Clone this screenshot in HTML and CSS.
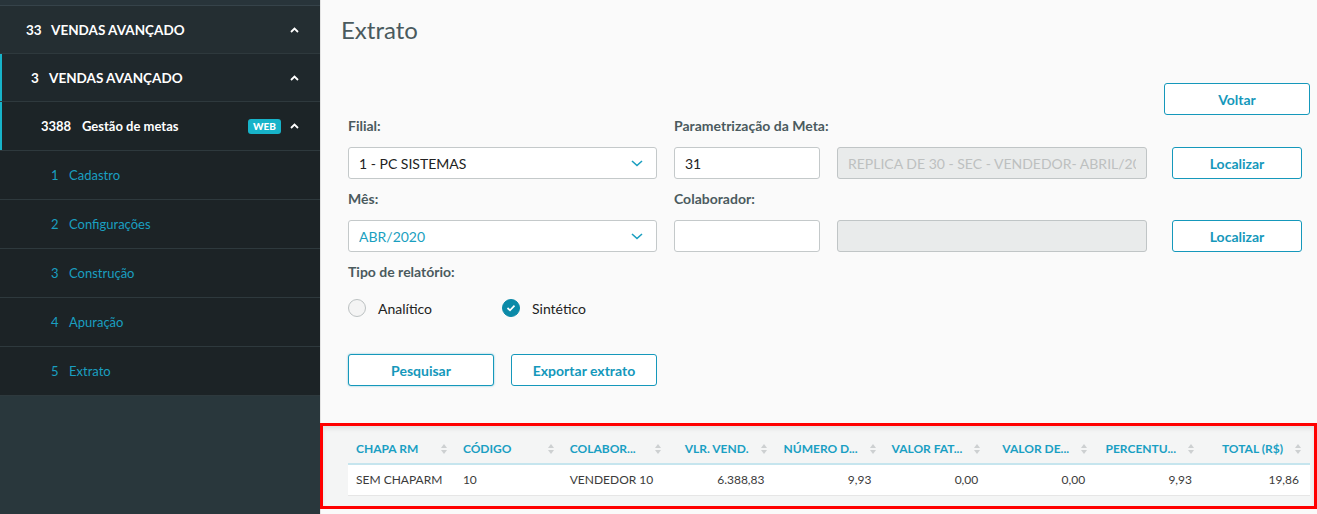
FILE: index.html
```html
<!DOCTYPE html>
<html lang="pt-BR">
  <head>
    <meta charset="UTF-8">
    <title>Extrato</title>
    <link rel="stylesheet" href="styles.css">
  </head>
  <body>

    <nav id="menu">
      <div class="menu-stub"></div>
      <div class="menu-row level-1">
        <span class="num">33</span><span class="label">VENDAS AVANÇADO</span>
        <svg class="caret" width="9" height="6" viewBox="0 0 9 6"><path d="M1 5 L4.5 1.5 L8 5" fill="none" stroke="#fff" stroke-width="1.8"/></svg>
      </div>
      <div class="menu-row level-2 active">
        <span class="num">3</span><span class="label">VENDAS AVANÇADO</span>
        <svg class="caret" width="9" height="6" viewBox="0 0 9 6"><path d="M1 5 L4.5 1.5 L8 5" fill="none" stroke="#fff" stroke-width="1.8"/></svg>
      </div>
      <div class="menu-row level-3 active">
        <span class="num">3388</span><span class="label">Gestão de metas</span>
        <span class="badge">WEB</span>
        <svg class="caret" width="9" height="6" viewBox="0 0 9 6"><path d="M1 5 L4.5 1.5 L8 5" fill="none" stroke="#fff" stroke-width="1.8"/></svg>
      </div>
      <div class="menu-row sub"><span class="num">1</span><span class="label">Cadastro</span></div>
      <div class="menu-row sub"><span class="num">2</span><span class="label">Configurações</span></div>
      <div class="menu-row sub"><span class="num">3</span><span class="label">Construção</span></div>
      <div class="menu-row sub"><span class="num">4</span><span class="label">Apuração</span></div>
      <div class="menu-row sub"><span class="num">5</span><span class="label">Extrato</span></div>
    </nav>

    <main id="page">
      <div class="content">
        <h1 class="title">Extrato</h1>

        <div class="toolbar">
          <button class="btn btn-back">Voltar</button>
        </div>

        <div class="form">
          <div class="field">
            <label>Filial:</label>
            <div class="select">
              <select><option>1 - PC SISTEMAS</option></select>
              <svg class="chevron" width="12" height="7" viewBox="0 0 12 7"><path d="M1 1 L6 5.5 L11 1" fill="none" stroke="#1a9fc0" stroke-width="1.6"/></svg>
            </div>
          </div>
          <div class="field">
            <label>Parametrização da Meta:</label>
            <input type="text" value="31">
          </div>
          <div class="field no-label">
            <input type="text" class="disabled" value="REPLICA DE 30 - SEC - VENDEDOR- ABRIL/2020" disabled>
          </div>
          <div class="field no-label">
            <button class="btn btn-find">Localizar</button>
          </div>

          <div class="field">
            <label>Mês:</label>
            <div class="select">
              <select class="accent"><option>ABR/2020</option></select>
              <svg class="chevron" width="12" height="7" viewBox="0 0 12 7"><path d="M1 1 L6 5.5 L11 1" fill="none" stroke="#1a9fc0" stroke-width="1.6"/></svg>
            </div>
          </div>
          <div class="field">
            <label>Colaborador:</label>
            <input type="text" value="">
          </div>
          <div class="field no-label">
            <input type="text" class="disabled" value="" disabled>
          </div>
          <div class="field no-label">
            <button class="btn btn-find">Localizar</button>
          </div>

          <div class="field wide">
            <label>Tipo de relatório:</label>
            <div class="radios">
              <span class="radio"><span class="dot"></span>Analítico</span>
              <span class="radio checked">
                <span class="dot"><svg width="10" height="8" viewBox="0 0 10 8"><path d="M1.5 4 L4 6.3 L8.5 1.7" fill="none" stroke="#fff" stroke-width="1.7"/></svg></span>Sintético
              </span>
            </div>
          </div>
        </div>

        <div class="actions">
          <button class="btn btn-action focus">Pesquisar</button>
          <button class="btn btn-action">Exportar extrato</button>
        </div>
      </div>

      <section class="result">
        <table class="grid">
          <thead>
            <tr>
              <th><div class="th"><span>CHAPA RM</span><i class="sort"></i></div></th>
              <th><div class="th"><span>CÓDIGO</span><i class="sort"></i></div></th>
              <th><div class="th"><span>COLABOR...</span><i class="sort"></i></div></th>
              <th class="num"><div class="th"><span>VLR. VEND.</span><i class="sort"></i></div></th>
              <th class="num"><div class="th"><span>NÚMERO D...</span><i class="sort"></i></div></th>
              <th class="num"><div class="th"><span>VALOR FAT...</span><i class="sort"></i></div></th>
              <th class="num"><div class="th"><span>VALOR DE...</span><i class="sort"></i></div></th>
              <th class="num"><div class="th"><span>PERCENTU...</span><i class="sort"></i></div></th>
              <th class="num"><div class="th"><span>TOTAL (R$)</span><i class="sort"></i></div></th>
            </tr>
          </thead>
          <tbody>
            <tr>
              <td>SEM CHAPARM</td>
              <td>10</td>
              <td>VENDEDOR 10</td>
              <td class="num">6.388,83</td>
              <td class="num">9,93</td>
              <td class="num">0,00</td>
              <td class="num">0,00</td>
              <td class="num">9,93</td>
              <td class="num">19,86</td>
            </tr>
          </tbody>
        </table>
      </section>
    </main>

  </body>
</html>
```

FILE: styles.css
```css
html, body {
  margin: 0;
  padding: 0;
  box-sizing: border-box;
}
*, *:before, *:after {
  box-sizing: inherit;
}
body {
  display: flex;
  width: 1317px;
  height: 514px;
  overflow: hidden;
  font-family: Lato, 'Open Sans', sans-serif;
  background-color: #fafafa;
}

/* menu */
#menu {
  width: 320px;
  flex: none;
  background-color: #29373c;
}
.menu-stub {
  height: 6px;
  background-color: #28343a;
  border-bottom: 1px solid #36434a;
}
.menu-row {
  display: flex;
  align-items: center;
  height: 48px;
  padding-right: 21px;
  border-bottom: 1px solid #2e393d;
  color: #fff;
  font-size: 13.5px;
  font-weight: 700;
}
.menu-row .label {
  flex: 1;
}
.menu-row.level-1 {
  background-color: #242e32;
  padding-left: 26px;
}
.menu-row.level-1 .num {
  width: 25px;
}
.menu-row.level-2 {
  background-color: #1f282c;
  padding-left: 31px;
}
.menu-row.level-2 .num {
  width: 18px;
}
.menu-row.level-3 {
  background-color: #1c2427;
  padding-left: 41px;
  font-size: 13px;
  height: 49px;
}
.menu-row.level-3 .num {
  width: 41px;
}
.menu-row.active {
  box-shadow: inset 2px 0 0 #17b3c9;
}
.menu-row.sub {
  height: 49px;
  background-color: #1c2326;
  padding-left: 51px;
  color: #1a9fc0;
  font-size: 13px;
  font-weight: 400;
}
.menu-row.sub .num {
  width: 18px;
}
.badge {
  background-color: #17b3c9;
  color: #fff;
  font-size: 10px;
  font-weight: 900;
  padding: 2px 5px;
  border-radius: 3px;
  margin-right: 9px;
  line-height: 11px;
}
.caret {
  display: block;
}

/* page */
#page {
  flex: 1;
  display: flex;
  flex-direction: column;
  box-shadow: inset 1px 0 0 #e4e4e4;
}
.content {
  padding: 0 7px 0 28px;
}
.title {
  margin: 15px 0 0 -7px;
  font-size: 24px;
  line-height: 30px;
  font-weight: 400;
  color: #4a5a5e;
}
.toolbar {
  display: flex;
  justify-content: flex-end;
  margin-top: 38px;
}
.btn {
  height: 32px;
  background-color: #fff;
  border: 1px solid #1598bb;
  border-radius: 3px;
  color: #1598bb;
  font-family: Lato, sans-serif;
  font-size: 14px;
  font-weight: 700;
  cursor: pointer;
}
.btn-back {
  width: 146px;
}
.form {
  display: grid;
  grid-template-columns: 309px 146px 310px 138px;
  column-gap: 17px;
  row-gap: 10px;
  margin-top: 1px;
}
.field {
  display: flex;
  flex-direction: column;
}
.field label {
  height: 20px;
  line-height: 20px;
  margin-bottom: 11px;
  font-size: 14px;
  font-weight: 700;
  color: #4b5a5e;
  white-space: nowrap;
}
.field.no-label {
  padding-top: 31px;
}
.field.wide {
  grid-column: 1 / 3;
}
.select {
  position: relative;
}
.select select, .field input {
  width: 100%;
  height: 32px;
  padding: 0 10px;
  background-color: #fff;
  border: 1px solid #c4c9ca;
  border-radius: 3px;
  font-family: Lato, sans-serif;
  font-size: 14px;
  color: #222;
  outline: none;
  -webkit-appearance: none;
  appearance: none;
}
.select select.accent {
  color: #1a9fc0;
}
.chevron {
  position: absolute;
  right: 14px;
  top: 13px;
}
.field input.disabled {
  background-color: #e9ebeb;
  border-color: #c0c5c6;
  color: #bdc0c0;
}
.btn-find {
  width: 130px;
  margin-left: 8px;
}
.radios {
  display: flex;
  align-items: center;
  height: 24px;
  margin-top: 3px;
  font-size: 14px;
  color: #222;
}
.radio {
  display: flex;
  align-items: center;
  width: 154px;
}
.radio .dot {
  display: flex;
  align-items: center;
  justify-content: center;
  width: 18px;
  height: 18px;
  margin-right: 12px;
  border: 1px solid #bcc1c2;
  border-radius: 50%;
  background-color: #f4f4f4;
}
.radio.checked .dot {
  background-color: #0b8aa8;
  border-color: #0b8aa8;
}
.actions {
  display: flex;
  gap: 17px;
  margin-top: 34px;
}
.btn-action {
  width: 146px;
}
.btn-action.focus {
  box-shadow: 0 0 2px rgba(21, 152, 187, 0.6);
}

/* result grid */
.result {
  margin-top: 37px;
  border: 3px solid #ff0000;
  padding: 8px 4px 10px 25px;
  background-color: #f4f5f5;
  box-shadow: inset 0 3px 4px rgba(0, 0, 0, 0.08);
}
.grid {
  width: 100%;
  border-collapse: collapse;
  table-layout: fixed;
  font-size: 12px;
}
.grid th {
  height: 30px;
  padding: 0 8px;
  border-bottom: 2px solid #c6e5ee;
  color: #1a9fc3;
  font-weight: 700;
  text-align: left;
}
.th {
  display: flex;
  align-items: center;
  justify-content: space-between;
  white-space: nowrap;
}
.grid th.num .th {
  justify-content: flex-end;
  gap: 12px;
  padding-right: 1px;
}
.sort {
  display: block;
  position: relative;
  width: 6px;
  height: 10px;
}
.sort:before, .sort:after {
  content: '';
  position: absolute;
  left: 0;
  border-left: 3px solid transparent;
  border-right: 3px solid transparent;
}
.sort:before {
  top: 0;
  border-bottom: 4px solid #cdd0d1;
}
.sort:after {
  bottom: 0;
  border-top: 4px solid #cdd0d1;
}
.grid td {
  height: 31px;
  padding: 0 8px;
  background-color: #fff;
  border-bottom: 1px solid #e6e6e6;
  color: #3b3b3b;
  white-space: nowrap;
}
.grid td.num {
  text-align: right;
  padding-right: 11px;
}
```
